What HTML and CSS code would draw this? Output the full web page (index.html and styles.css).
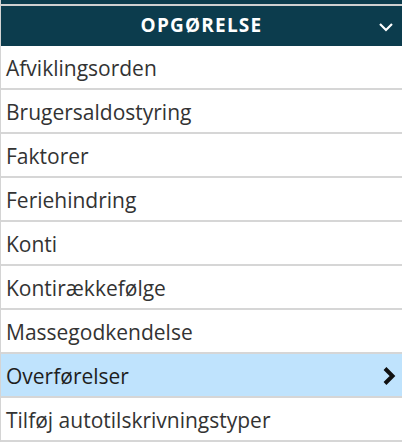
FILE: index.html
```html
<!DOCTYPE html>
<html lang="da">
<head>
  <meta charset="UTF-8" />
  <title>Opgørelse</title>
  <link rel="stylesheet" href="styles.css">
</head>
<body>
  <div class="menu">
    <div class="menu-top"></div>
    <div class="menu-head">
      <span class="menu-title">OPGØRELSE</span>
      <svg class="chev-down" width="16" height="10" viewBox="0 0 16 10">
        <path d="M2 2 L8 8 L14 2" fill="none" stroke="#fff" stroke-width="2.2" />
      </svg>
    </div>
    <ul class="menu-list">
      <li class="menu-item">Afviklingsorden</li>
      <li class="menu-item">Brugersaldostyring</li>
      <li class="menu-item">Faktorer</li>
      <li class="menu-item">Feriehindring</li>
      <li class="menu-item">Konti</li>
      <li class="menu-item">Kontirækkefølge</li>
      <li class="menu-item">Massegodkendelse</li>
      <li class="menu-item active">
        Overførelser
        <svg class="chev-right" width="16" height="20" viewBox="0 0 16 20">
          <path d="M4 2.5 L11.5 10 L4 17.5" fill="none" stroke="#111" stroke-width="4" />
        </svg>
      </li>
      <li class="menu-item">Tilføj autotilskrivningstyper</li>
    </ul>
  </div>
</body>
</html>
```

FILE: styles.css
```css
body {
  margin: 0;
  background: #fff;
  font-family: "Open Sans", "Liberation Sans", sans-serif;
}

.menu {
  width: 402px;
  border-left: 1px solid #d4d4d4;
  box-sizing: border-box;
}

.menu-top {
  height: 4px;
  background: #0c3c4d;
  border-bottom: 2px solid #d0d0d0;
}

.menu-head {
  height: 40px;
  background: #0c3c4d;
  display: flex;
  align-items: center;
  justify-content: center;
  position: relative;
}

.menu-title {
  color: #fff;
  font-weight: bold;
  font-size: 19px;
  letter-spacing: 1.2px;
  margin-top: -2px;
}

.chev-down {
  position: absolute;
  right: 8px;
  top: 16px;
}

.menu-list {
  list-style: none;
  margin: 0;
  padding: 0;
}

.menu-item {
  display: flex;
  align-items: center;
  justify-content: space-between;
  height: 41px;
  padding: 1px 5px 0 5px;
  border-bottom: 2px solid #d6d6d6;
  font-size: 21px;
  color: #333;
}

.menu-item.active {
  background: #bfe3fd;
  color: #1e1e1e;
}
```
